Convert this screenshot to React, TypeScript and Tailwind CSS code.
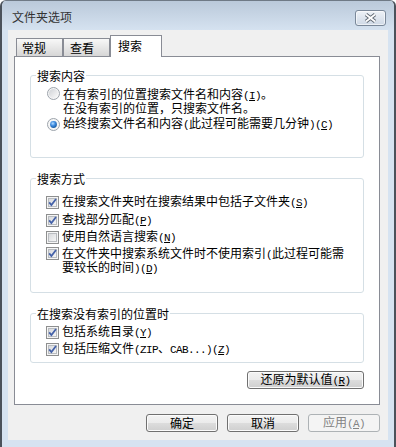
import React from "react";

const FONT = 'font-["Noto_Sans_CJK_SC",sans-serif]';

function Mono({ children }: { children: React.ReactNode }) {
  return (
    <span className='font-["Liberation_Mono",monospace] text-[11px] tracking-[-0.6px]'>
      {children}
    </span>
  );
}

function Key({ k }: { k: string }) {
  return (
    <Mono>
      (<span className="underline underline-offset-[1px]">{k}</span>)
    </Mono>
  );
}

function Radio({ checked }: { checked?: boolean }) {
  return (
    <svg width="13" height="13" viewBox="0 0 13 13" className="shrink-0">
      <defs>
        <linearGradient id="radio-in" x1="0" y1="0" x2="1" y2="1">
          <stop offset="0" stopColor="#cfd2d6" />
          <stop offset="1" stopColor="#fbfbfb" />
        </linearGradient>
        <radialGradient id="radio-dot" cx="0.4" cy="0.35" r="0.75">
          <stop offset="0" stopColor="#b4dcff" />
          <stop offset="0.45" stopColor="#3d8be0" />
          <stop offset="1" stopColor="#0f4d8f" />
        </radialGradient>
      </defs>
      <circle cx="6.5" cy="6.5" r="6" fill="#f6f6f6" stroke="#9ca3ab" />
      {checked ? (
        <circle cx="6.5" cy="6.5" r="3.4" fill="url(#radio-dot)" />
      ) : (
        <circle cx="6.5" cy="6.5" r="4.6" fill="url(#radio-in)" />
      )}
    </svg>
  );
}

function Check({ checked }: { checked?: boolean }) {
  return (
    <svg width="13" height="13" viewBox="0 0 13 13" className="shrink-0">
      <defs>
        <linearGradient id="check-in" x1="0" y1="0" x2="1" y2="1">
          <stop offset="0" stopColor="#d6d8db" />
          <stop offset="1" stopColor="#f7f7f7" />
        </linearGradient>
      </defs>
      <rect x="0.5" y="0.5" width="12" height="12" fill="#f5f5f5" stroke="#8e8f8f" />
      <rect x="2.5" y="2.5" width="8" height="8" fill="url(#check-in)" stroke="#b9bcc0" />
      {checked && (
        <path
          d="M3.2 6.4 L5.4 9 L10 3"
          fill="none"
          stroke="#4461a8"
          strokeWidth="1.8"
        />
      )}
    </svg>
  );
}

function CloseButton() {
  return (
    <div className="mt-[9px] flex h-[16px] w-[31px] items-center justify-center rounded-[3px] border border-[#7a8899] bg-linear-to-b from-[#eef2f7] to-[#cfd9e6] shadow-[inset_0_0_0_1px_rgba(255,255,255,0.6)]">
      <svg width="13" height="10" viewBox="0 0 13 10">
        <path d="M2 1.5 L11 8.5 M11 1.5 L2 8.5" stroke="#5f6873" strokeWidth="3.6" />
        <path d="M2 1.5 L11 8.5 M11 1.5 L2 8.5" stroke="#ffffff" strokeWidth="1.8" />
      </svg>
    </div>
  );
}

function Tab({ label, selected, pl }: { label: string; selected?: boolean; pl: string }) {
  if (selected) {
    return (
      <div className={`relative z-10 -mb-[1px] h-[22px] w-[52px] border border-b-0 border-[#898c95] bg-white pt-[2px] leading-[15px] ${pl}`}>
        {label}
      </div>
    );
  }
  return (
    <div className={`h-[18px] w-[47px] border border-b-0 border-[#898c95] bg-linear-to-b from-[#f8f8f8] to-[#d6d6d6] leading-[17px] ${pl}`}>
      {label}
    </div>
  );
}

function Button({ children, disabled, w = "w-[72px]" }: { children: React.ReactNode; disabled?: boolean; w?: string }) {
  return (
    <div
      className={
        disabled
          ? `flex h-[18px] ${w} items-center justify-center rounded-[3px] border border-[#adb2b5] bg-[#f4f4f4] leading-[16px] text-[#838383]`
          : `flex h-[18px] ${w} items-center justify-center rounded-[3px] border border-[#707070] bg-[linear-gradient(#f3f3f3,#ebebeb_50%,#dddddd_50%,#cfcfcf)] leading-[16px] shadow-[inset_0_0_0_1px_#fbfbfb]`
      }
    >
      {children}
    </div>
  );
}

function Group({ title, children, className = "" }: { title: string; children: React.ReactNode; className?: string }) {
  return (
    <fieldset className={`rounded-[3px] border border-[#d5dfe5] ${className}`}>
      <legend className="ml-[5px] px-[1px] leading-[13px]">{title}</legend>
      {children}
    </fieldset>
  );
}

export default function App() {
  return (
    <div className={`h-[447px] w-[396px] bg-white text-[12px] text-black ${FONT}`}>
      <div className="flex h-full flex-col rounded-t-[6px] border-x-2 border-t border-x-[#4b525b] border-t-[#6f7a86] bg-[#d6e3f1]">
        {/* title bar */}
        <div className="flex h-[29px] items-start justify-between rounded-t-[5px] bg-linear-to-b from-[#bac9da] to-[#d5e2f0] pl-[10px] pr-[8px]">
          <span className="mt-[9px] leading-[14px] text-[#333]">文件夹选项</span>
          <CloseButton />
        </div>

        <div className="mx-[6px] mb-[7px] flex flex-1 flex-col bg-[#f0f0f0]">
          {/* tabs */}
          <div className="mt-[5px] flex h-[21px] items-end pl-[8px]">
            <Tab label="常规" pl="pl-[5px]" />
            <Tab label="查看" pl="pl-[6px]" />
            <Tab label="搜索" pl="pl-[7px]" selected />
          </div>

          {/* panel */}
          <div className="ml-[6px] flex h-[349px] w-[366px] flex-col border border-[#898c95] bg-white px-[15px] pt-[12px]">
            <Group title="搜索内容">
              <div className="flex flex-col pb-[26px] pl-[16px] pt-[6px] leading-[12px]">
                <div className="flex items-start gap-[3px]">
                  <div className="-mt-[1px]">
                    <Radio />
                  </div>
                  <div>
                    在有索引的位置搜索文件名和内容<Key k="I" />。
                    <br />
                    在没有索引的位置，只搜索文件名。
                  </div>
                </div>
                <div className="mt-[3px] flex items-center gap-[3px]">
                  <Radio checked />
                  <div>
                    始终搜索文件名和内容<Mono>(</Mono>此过程可能需要几分钟<Mono>)</Mono>
                    <Key k="C" />
                  </div>
                </div>
              </div>
            </Group>

            <Group title="搜索方式" className="mt-[14px]">
              <div className="flex flex-col pb-[17px] pl-[15px] pt-[10px] leading-[12px]">
                <div className="flex items-center gap-[3px]">
                  <Check checked />
                  <div>
                    在搜索文件夹时在搜索结果中包括子文件夹<Key k="S" />
                  </div>
                </div>
                <div className="mt-[4px] flex items-center gap-[3px]">
                  <Check checked />
                  <div>
                    查找部分匹配<Key k="P" />
                  </div>
                </div>
                <div className="mt-[3px] flex items-center gap-[3px]">
                  <Check />
                  <div>
                    使用自然语言搜索<Key k="N" />
                  </div>
                </div>
                <div className="mt-[3px] flex items-start gap-[3px]">
                  <Check checked />
                  <div>
                    在文件夹中搜索系统文件时不使用索引<Mono>(</Mono>此过程可能需
                    <br />
                    要较长的时间<Mono>)</Mono>
                    <Key k="D" />
                  </div>
                </div>
              </div>
            </Group>

            <Group title="在搜索没有索引的位置时" className="mt-[14px]">
              <div className="flex flex-col pb-[6px] pl-[15px] pt-[5px] leading-[12px]">
                <div className="flex items-center gap-[3px]">
                  <Check checked />
                  <div>
                    包括系统目录<Key k="Y" />
                  </div>
                </div>
                <div className="mt-[3px] flex items-center gap-[3px]">
                  <Check checked />
                  <div>
                    包括压缩文件<Mono>(ZIP</Mono>、<Mono>CAB...)</Mono>
                    <Key k="Z" />
                  </div>
                </div>
              </div>
            </Group>

            <div className="mt-[8px] self-end">
              <Button w="w-[117px]">
                <span>
                  还原为默认值<Key k="R" />
                </span>
              </Button>
            </div>
          </div>

          {/* dialog buttons */}
          <div className="ml-[6px] mt-[9px] flex w-[366px] justify-end gap-[9px]">
            <Button>确定</Button>
            <Button>取消</Button>
            <Button disabled>
              <span>
                应用<Key k="A" />
              </span>
            </Button>
          </div>
        </div>
      </div>
    </div>
  );
}
